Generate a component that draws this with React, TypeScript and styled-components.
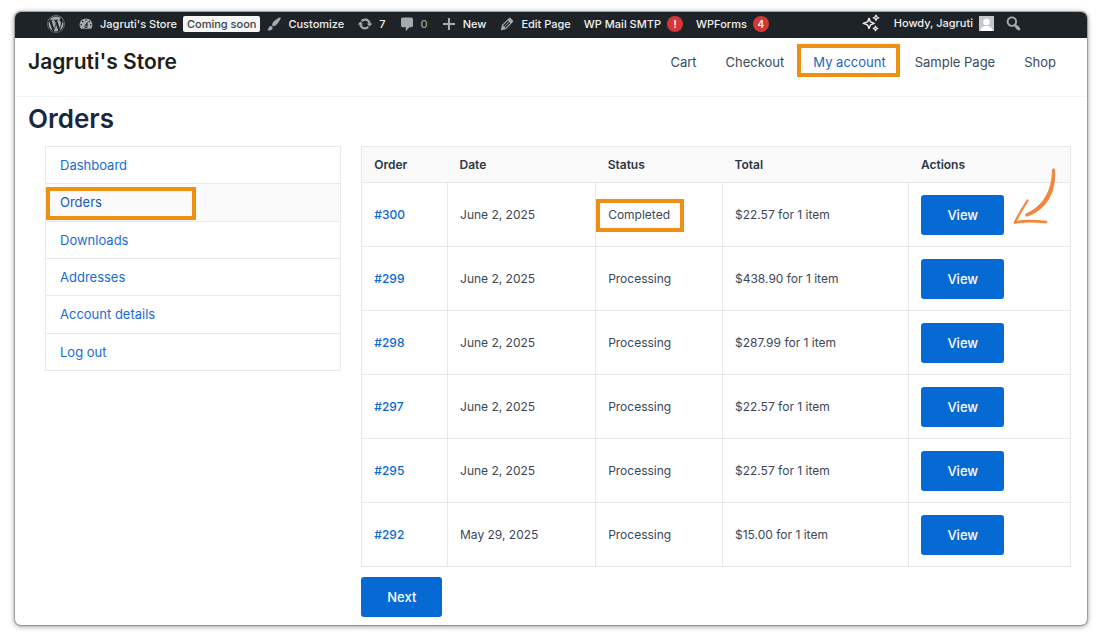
import React from 'react';
import styled, { createGlobalStyle, css } from 'styled-components';
import { FaWordpress } from 'react-icons/fa';

const GlobalStyle = createGlobalStyle`
  *, *::before, *::after { box-sizing: border-box; }
  body {
    margin: 0;
    background: #fff;
    color: #334155;
    font-family: Inter, "Liberation Sans", sans-serif;
    font-size: 13px;
  }
  a { color: inherit; text-decoration: none; }
  ul { list-style: none; margin: 0; padding: 0; }
  svg { display: block; }
`;

const Page = styled.div`
  padding: 12px 13px 12px 15px;
`;

const Frame = styled.div`
  min-height: calc(100vh - 24px);
  padding-bottom: 8px;
  border-radius: 6px;
  background: #fff;
  box-shadow: 0 0 1px 1px rgba(0, 0, 0, 0.25), 0 1px 5px 1px rgba(0, 0, 0, 0.35);
`;

const AdminBar = styled.div`
  display: flex;
  align-items: center;
  justify-content: space-between;
  height: 26px;
  padding: 0 64px 2px 32px;
  border-radius: 6px 6px 0 0;
  background: #1d2327;
  color: #f0f0f1;
  font-size: 11px;
  font-weight: 500;
  line-height: 16px;
  white-space: nowrap;
`;

const BarGroup = styled.div`
  display: flex;
  align-items: center;
  gap: 13px;
`;

const UserGroup = styled(BarGroup)`
  gap: 11px;
  padding-bottom: 2px;
`;

const BarItem = styled.a<{ $muted?: boolean }>`
  display: flex;
  align-items: center;
  gap: 6px;

  span { color: ${(p) => (p.$muted ? '#9ca2a7' : 'inherit')}; }
`;

const SiteGroup = styled.div`
  display: flex;
  align-items: center;
  gap: 6px;
`;

const Icon = styled.svg`
  width: 16px;
  height: 16px;
  fill: #a7aaad;
`;

const Soon = styled.a`
  padding: 0 4px;
  border-radius: 2px;
  background: #f6f7f7;
  color: #3c434a;
`;

const Count = styled.b`
  width: 16px;
  height: 16px;
  border-radius: 50%;
  background: #d63638;
  color: #fff;
  font-size: 10px;
  font-weight: 600;
  line-height: 16px;
  text-align: center;
`;

const IconButton = styled.button`
  padding: 0 1px;
  border: 0;
  background: none;
`;

const SiteHeader = styled.header`
  display: flex;
  align-items: center;
  justify-content: space-between;
  height: 59px;
  padding: 0 17px 11px 13px;
  border-bottom: 1px solid #f3f4f5;
`;

const SiteTitle = styled.a`
  color: #1c1e21;
  font-size: 21px;
  font-weight: 600;
  line-height: 28px;
`;

const Nav = styled.nav`
  display: flex;
  gap: 1px;
`;

const highlight = css`
  position: relative;

  &::after {
    content: '';
    position: absolute;
    border: 4px solid #ee9112;
    pointer-events: none;
  }
`;

const NavLink = styled.a<{ $current?: boolean }>`
  padding: 0 14px;
  line-height: 24px;
  color: ${(p) => (p.$current ? '#1c64c8' : '#3b4a5f')};
  ${(p) => p.$current && css`
    ${highlight}
    &::after { inset: -6px 0 -3px -2px; }
  `}
`;

const Heading = styled.h1`
  margin: 0;
  padding: 4px 13px 9px;
  color: #1a2740;
  font-size: 26px;
  font-weight: 600;
  line-height: 36px;
`;

const Columns = styled.div`
  display: grid;
  grid-template-columns: 296fr 709fr;
  gap: 20px;
  align-items: start;
  padding: 0 16px 0 30px;
`;

const Menu = styled.ul`
  display: grid;
  grid-auto-rows: 1fr;
  min-height: 225px;
  border: 1px solid #e8e9eb;
  border-bottom: 0;
`;

const MenuItem = styled.li<{ $current?: boolean }>`
  display: flex;
  align-items: center;
  padding: 0 14px;
  border-bottom: 1px solid #e8e9eb;
  color: ${(p) => (p.$current ? '#1859b0' : '#1a6bd4')};
  background: ${(p) => (p.$current ? '#fafafa' : '#fff')};
  ${(p) => p.$current && css`
    ${highlight}
    &::after { inset: 3px auto 1px 0; width: 150px; }
  `}
`;

const Table = styled.table`
  width: 100%;
  border-collapse: collapse;
  table-layout: fixed;
  border: 1px solid #e6e7e9;
  font-size: 12px;
  line-height: 18px;
`;

const HeadCell = styled.th`
  height: 36px;
  padding: 0 12px;
  border-bottom: 1px solid #e6e7e9;
  background: #fafafa;
  color: #2b3648;
  font-weight: 600;
  text-align: left;
`;

const Cell = styled.td`
  height: 64px;
  padding: 0 12px;
  border: 1px solid #e6e7e9;
  color: #3b4759;
`;

const OrderLink = styled.a`
  color: #0a66d2;
  font-weight: 500;
`;

const Marked = styled.span`
  ${highlight}
  &::after { inset: -8px -14px -10px -12px; }
`;

const ActionCell = styled(Cell)`
  position: relative;
`;

const Button = styled.button`
  display: block;
  height: 40px;
  padding: 0 26px;
  border: 0;
  border-radius: 3px;
  background: #066ad4;
  color: #fff;
  font-family: inherit;
  font-size: 13px;
  font-weight: 500;
  line-height: 20px;
`;

const Pager = styled.div`
  margin-top: 10px;
`;

const Arrow = styled.svg`
  position: absolute;
  left: 104px;
  bottom: 21px;
  width: 44px;
  height: 58px;
  fill: none;
  stroke: #f5853b;
  stroke-linecap: round;
  stroke-linejoin: round;
`;

const icons = {
  dashboard:
    'M3.76 16h12.48c1.1-1.37 1.76-3.11 1.76-5 0-4.42-3.58-8-8-8s-8 3.58-8 8c0 1.89.66 3.63 1.76 5zM10 4c.55 0 1 .45 1 1s-.45 1-1 1-1-.45-1-1 .45-1 1-1zM6 6c.55 0 1 .45 1 1s-.45 1-1 1-1-.45-1-1 .45-1 1-1zm8 0c.55 0 1 .45 1 1s-.45 1-1 1-1-.45-1-1 .45-1 1-1zm-5.37 5.55L12 7v6c0 1.1-.9 2-2 2s-2-.9-2-2c0-.57.24-1.08.63-1.45zM4 10c.55 0 1 .45 1 1s-.45 1-1 1-1-.45-1-1 .45-1 1-1zm12 0c.55 0 1 .45 1 1s-.45 1-1 1-1-.45-1-1 .45-1 1-1zm-5 3c0-.55-.45-1-1-1s-1 .45-1 1 .45 1 1 1 1-.45 1-1z',
  brush:
    'M18.33 3.57s.27-.8-.31-1.36c-.53-.52-1.22-.24-1.22-.24-.61.3-5.76 3.47-7.67 5.57-.86.96-2.06 3.79-1.09 4.82.92.98 3.96-.17 4.79-1 2.06-2.06 5.21-7.17 5.5-7.79zM1.4 17.65c2.37-1.56 1.46-3.41 3.23-4.64.93-.65 2.22-.62 3.08.29.63.67.8 2.57-.16 3.46-1.57 1.45-4 1.55-6.15.89z',
  update:
    'M10.2 3.28c3.53 0 6.43 2.61 6.92 6h2.08l-3.5 4-3.5-4h2.32c-.45-1.97-2.21-3.45-4.32-3.45-1.45 0-2.73.71-3.54 1.78L4.95 5.66C6.23 4.2 8.11 3.28 10.2 3.28zm-.4 13.44c-3.52 0-6.43-2.61-6.92-6H.8l3.5-4 3.5 4H5.48c.45 1.97 2.21 3.45 4.32 3.45 1.45 0 2.73-.71 3.54-1.78l1.71 1.95c-1.28 1.46-3.15 2.38-5.25 2.38z',
  comment:
    'M4.500 2h11c1.100 0 2 .9 2 2v8c0 1.100-.9 2-2 2H13l-4.500 5V14h-4c-1.100 0-2-.9-2-2V4c0-1.100.9-2 2-2z',
  plus: 'M17.500 8.700v2.600h-6.200v6.200H8.700v-6.200H2.500V8.700h6.200V2.500h2.600v6.200z',
  edit:
    'M13.89 3.39l2.71 2.72c.46.46.42 1.24.03 1.64l-8.01 8.02-5.56 1.16 1.16-5.58s7.6-7.63 7.99-8.03c.39-.39 1.22-.39 1.68.07zm-2.73 2.79l-5.59 5.61 1.11 1.11 5.54-5.65zm-2.97 8.23l5.58-5.6-1.07-1.08-5.59 5.6z',
  search:
    'M12.14 4.18c1.87 1.87 2.11 4.75.72 6.89.12.1.22.21.36.31.2.16.47.36.81.59.34.24.56.39.66.47.42.31.73.57.94.78.32.32.6.65.84 1 .25.35.44.69.59 1.04.14.35.21.68.18 1-.02.32-.14.59-.36.81s-.49.34-.81.36c-.31.02-.65-.04-.99-.19-.35-.14-.7-.34-1.04-.59-.35-.24-.68-.52-1-.84-.21-.21-.47-.52-.77-.93-.1-.13-.25-.35-.47-.66-.22-.32-.4-.57-.56-.78-.16-.2-.29-.35-.44-.5-2.07 1.09-4.69.76-6.44-.98-2.14-2.15-2.14-5.64 0-7.78 2.15-2.15 5.63-2.15 7.78 0zm-1.41 6.36c1.36-1.37 1.36-3.58 0-4.95-1.37-1.37-3.59-1.37-4.95 0-1.37 1.37-1.37 3.58 0 4.95 1.36 1.37 3.58 1.37 4.95 0z',
};

const viewBoxes: Partial<Record<keyof typeof icons, string>> = {
  edit: '1 1 18 18',
  search: '2 1 17 17',
};

const Dashicon = ({ name }: { name: keyof typeof icons }) => (
  <Icon viewBox={viewBoxes[name] ?? '0 0 20 20'} aria-hidden="true">
    <path d={icons[name]} />
  </Icon>
);

const Sparkles = () => (
  <svg width="20" height="18" viewBox="0 0 20 18" fill="none" stroke="#f0f0f1" strokeLinejoin="round" aria-hidden="true">
    <path strokeWidth="1.4" d="M7 4.200 8.500 7.900 12.200 9.400 8.500 10.900 7 14.600 5.500 10.900 1.200 9.400 5.500 7.900z" />
    <path strokeWidth="1.200" d="M14 1l.8 2 2 .8-2 .8-.8 2-.8-2-2-.8 2-.8zM13.500 12.200l.7 1.600 1.600.7-1.600.7-.7 1.600-.7-1.600-1.600-.7 1.600-.7z" />
  </svg>
);

const Avatar = () => (
  <svg width="15" height="15" viewBox="0 0 15 15" aria-hidden="true">
    <path fill="#c5c8ca" d="M0 0h15v15H0z" />
    <circle cx="7.500" cy="6" r="3.200" fill="#fff" />
    <path fill="#fff" d="M1.500 15c0-3.500 2.500-4.200 4.500-5h3c2 .8 4.500 1.500 4.500 5z" />
  </svg>
);

const pages = ['Cart', 'Checkout', 'My account', 'Sample Page', 'Shop'];
const menu = ['Dashboard', 'Orders', 'Downloads', 'Addresses', 'Account details', 'Log out'];
const columns = [
  { label: 'Order', width: '12.1%' },
  { label: 'Date', width: '20.9%' },
  { label: 'Status', width: '17.9%' },
  { label: 'Total', width: '26.3%' },
  { label: 'Actions', width: '22.8%' },
];
const orders = [
  { id: 300, date: 'June 2, 2025', status: 'Completed', total: '$22.57' },
  { id: 299, date: 'June 2, 2025', status: 'Processing', total: '$438.90' },
  { id: 298, date: 'June 2, 2025', status: 'Processing', total: '$287.99' },
  { id: 297, date: 'June 2, 2025', status: 'Processing', total: '$22.57' },
  { id: 295, date: 'June 2, 2025', status: 'Processing', total: '$22.57' },
  { id: 292, date: 'May 29, 2025', status: 'Processing', total: '$15.00' },
];

export default function App() {
  return (
    <Page>
      <GlobalStyle />
      <Frame>
        <AdminBar>
          <BarGroup>
            <BarItem href="#wp" aria-label="About WordPress">
              <FaWordpress size={18} color="#a7aaad" />
            </BarItem>
            <SiteGroup>
              <BarItem href="#site"><Dashicon name="dashboard" /><span>Jagruti's Store</span></BarItem>
              <Soon href="#visibility">Coming soon</Soon>
              <BarItem href="#customize"><Dashicon name="brush" /><span>Customize</span></BarItem>
            </SiteGroup>
            <BarItem href="#updates"><Dashicon name="update" /><span>7</span></BarItem>
            <BarItem href="#comments" $muted><Dashicon name="comment" /><span>0</span></BarItem>
            <BarItem href="#new"><Dashicon name="plus" /><span>New</span></BarItem>
            <BarItem href="#edit"><Dashicon name="edit" /><span>Edit Page</span></BarItem>
            <BarItem href="#smtp"><span>WP Mail SMTP</span><Count>!</Count></BarItem>
            <BarItem href="#forms"><span>WPForms</span><Count>4</Count></BarItem>
          </BarGroup>
          <UserGroup>
            <IconButton type="button" aria-label="Assistant"><Sparkles /></IconButton>
            <BarItem href="#profile"><span>Howdy, Jagruti</span><Avatar /></BarItem>
            <IconButton type="button" aria-label="Search"><Dashicon name="search" /></IconButton>
          </UserGroup>
        </AdminBar>

        <SiteHeader>
          <SiteTitle href="#home">Jagruti's Store</SiteTitle>
          <Nav>
            {pages.map((page) => (
              <NavLink key={page} href="#page" $current={page === 'My account'}>{page}</NavLink>
            ))}
          </Nav>
        </SiteHeader>

        <main>
          <Heading>Orders</Heading>
          <Columns>
            <nav aria-label="Account pages">
              <Menu>
                {menu.map((label) => (
                  <MenuItem key={label} $current={label === 'Orders'}>
                    <a href="#account">{label}</a>
                  </MenuItem>
                ))}
              </Menu>
            </nav>
            <section>
              <Table>
                <colgroup>
                  {columns.map((c) => <col key={c.label} width={c.width} />)}
                </colgroup>
                <thead>
                  <tr>{columns.map((c) => <HeadCell key={c.label} scope="col">{c.label}</HeadCell>)}</tr>
                </thead>
                <tbody>
                  {orders.map((o) => (
                    <tr key={o.id}>
                      <Cell><OrderLink href="#order">#{o.id}</OrderLink></Cell>
                      <Cell>{o.date}</Cell>
                      <Cell>{o.status === 'Completed' ? <Marked>{o.status}</Marked> : o.status}</Cell>
                      <Cell>{o.total} for 1 item</Cell>
                      <ActionCell>
                        <Button type="button">View</Button>
                        {o.id === 300 && (
                          <Arrow viewBox="0 0 44 58" aria-hidden="true">
                            <path fill="#f5853b" strokeWidth="1" d="M39.500 2.500C39.500 25 29 40 13 47c-1 1 0 2.500 1.500 2C32 43 43 27 41.500 3c-.3-1.500-1.800-1.500-2-.5z" />
                            <path strokeWidth="2.200" d="M14.500 33.500C10 41 5.500 47 2 55.500" />
                            <path strokeWidth="2.600" d="M2 55.500c9-2 21-1.500 31-.5" />
                          </Arrow>
                        )}
                      </ActionCell>
                    </tr>
                  ))}
                </tbody>
              </Table>
              <Pager><Button type="button">Next</Button></Pager>
            </section>
          </Columns>
        </main>
      </Frame>
    </Page>
  );
}
